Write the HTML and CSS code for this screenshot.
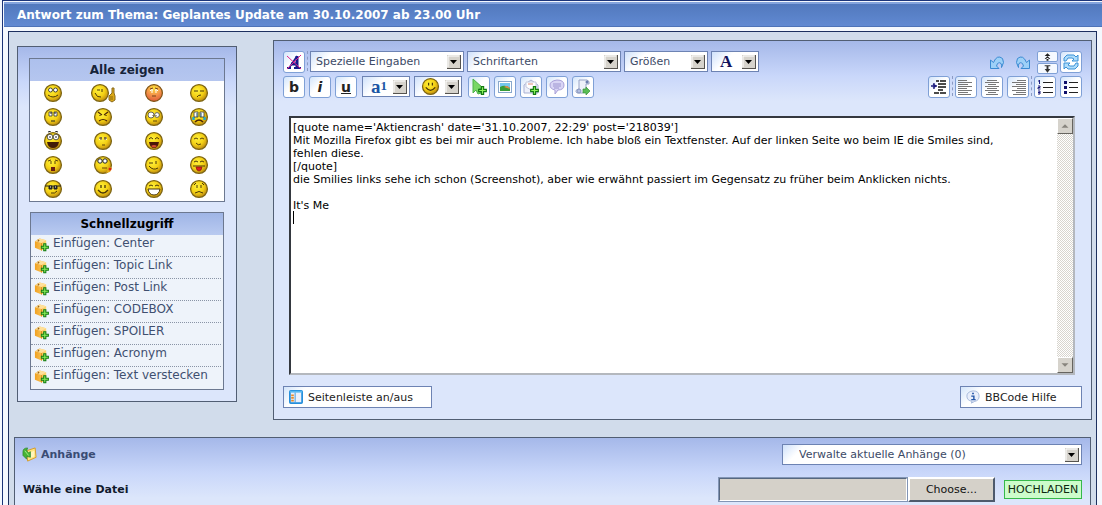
FILE: index.html
```html
<!DOCTYPE html>
<html lang="de">
<head>
<meta charset="utf-8">
<title>Antwort zum Thema</title>
<link rel="stylesheet" href="styles.css">
</head>
<body>
<svg class="defs" aria-hidden="true">
  <defs>
    <radialGradient id="gold" cx="40%" cy="35%" r="65%"><stop offset="0" stop-color="#fff23a"/><stop offset=".6" stop-color="#f3cf14"/><stop offset="1" stop-color="#c08d10"/></radialGradient>
    <radialGradient id="blush" cx="50%" cy="20%" r="80%"><stop offset="0" stop-color="#fbe03a"/><stop offset=".5" stop-color="#f59a4a"/><stop offset="1" stop-color="#df5a3a"/></radialGradient>
    <linearGradient id="box" x2="1"><stop offset="0" stop-color="#f0a020"/><stop offset="1" stop-color="#ffd873"/></linearGradient>
    <symbol id="head" viewBox="0 0 20 20"><circle cx="10" cy="10" r="8.4" fill="url(#gold)" stroke="#7c6413" stroke-width="1.3"/></symbol>
    <symbol id="plus" viewBox="0 0 8 8"><path d="M3 .6h2V3h2.4v2H5v2.4H3V5H.6V3H3z" fill="#8df25a" stroke="#127a12" stroke-width="1"/></symbol>
    <symbol id="package" viewBox="0 0 16 16"><path d="M1 5l5-3 7 2v8l-5 3-7-3z" fill="url(#box)"/><path d="M1 5l5-3 7 2-5 3z" fill="#ffe09a"/><path d="M4 3l2 1-2 2z" fill="#9a6418"/><path d="M8 7v8" stroke="#d98e1c"/><use href="#plus" x="7" y="7" width="9" height="9"/></symbol>
    <symbol id="arrow" viewBox="0 0 14 14"><rect width="14" height="14" fill="#d6d3cc"/><path d="M0 14h14V0" fill="none" stroke="#55534f" stroke-width="2"/><path d="M1 12V1h11" fill="none" stroke="#fff"/><path d="M3 5h7L6.500 9z" fill="#000"/></symbol>
    <symbol id="smile" viewBox="0 0 20 20"><use href="#head"/><path d="M8 6v3M12 6v3M5 11q5 6 10 0" fill="none" stroke="#4a3608" stroke-width="1.300"/></symbol>
    <symbol id="turn" viewBox="0 0 16 16"><path d="M1.500 6v8.500H10L7.500 12Q9 7 12 9.500 13 11 12.500 13.500 16 8 13.500 4.500 8 0 4.500 8.500z" fill="#9dd0f7" stroke="#3a8ad2"/></symbol>
  </defs>
</svg>
<main class="frame">
  <h1 class="title">Antwort zum Thema: Geplantes Update am 30.10.2007 ab 23.00 Uhr</h1>
  <div class="content">
    <div class="columns">
      <aside class="panel sidebar">
        <section class="smileys">
          <h2 class="box-head">Alle zeigen</h2>
          <div class="faces">
            <button class="face" aria-label="rolleyes"><svg viewBox="0 0 20 20"><use href="#head"/><circle cx="7.500" cy="7" r="2" fill="#fff" stroke="#222" stroke-width=".8"/><circle cx="12.500" cy="7" r="2" fill="#fff" stroke="#222" stroke-width=".8"/><path d="M5 12q5 4 10 0" fill="none" stroke="#4a3608"/></svg></button>
            <button class="face" aria-label="daumen"><svg class="wide" viewBox="0 0 26 20"><use href="#head" width="20" height="20"/><path d="M7 7h3M12 6v3M5 10q2 5 6 4" fill="none" stroke="#4a3608"/><path d="M22 5h2v5l1 3v4l-3 2-3-2v-4l3-3z" fill="#dba817" stroke="#8a6a1c"/><path d="M20 14h3M20 16h3" stroke="#70510a" stroke-width=".7"/></svg></button>
            <button class="face" aria-label="rot"><svg viewBox="0 0 20 20"><circle cx="10" cy="10" r="8.400" fill="url(#blush)" stroke="#7c5413" stroke-width="1.200"/><path d="M6 8q1-2 3-1M11 7q2-1 3 1M8 7v3M12 7v3" fill="none" stroke="#fff"/><path d="M6 6l3-1M11 5l3 1M8 13h4" stroke="#77411a"/></svg></button>
            <button class="face" aria-label="skeptisch"><svg viewBox="0 0 20 20"><use href="#head"/><path d="M5 8h4M11 8h4M8 14q1-2 4-2" fill="none" stroke="#4a3608"/></svg></button>

            <button class="face" aria-label="unschuldig"><svg viewBox="0 0 20 20"><use href="#head"/><path d="M6 5h3v4H6zM11 5h3v4h-3z" fill="#fff" stroke="#333" stroke-width=".8"/><path d="M8 5v2M12 5v2M8 14h4" stroke="#222"/></svg></button>
            <button class="face" aria-label="böse"><svg viewBox="0 0 20 20"><use href="#head"/><path d="M5 5l4 3M15 5l-4 3M7 8v1M13 8v1M6 14q4-3 8 0" fill="none" stroke="#4a2608" stroke-width="1.200"/></svg></button>
            <button class="face" aria-label="verwirrt"><svg viewBox="0 0 20 20"><use href="#head"/><circle cx="7" cy="8" r="3" fill="#fff" stroke="#444" stroke-width=".8"/><circle cx="13" cy="8" r="2.400" fill="#fff" stroke="#444" stroke-width=".8"/><path d="M9 8v1M12 8v1M9 14h4" stroke="#634708"/></svg></button>
            <button class="face" aria-label="weinen"><svg viewBox="0 0 20 20"><use href="#head"/><path d="M4.500 10v3M15.500 10v3" stroke="#24a6c8" stroke-width="2.500"/><path d="M5 5h4v5H5zM11 5h4v5h-4z" fill="#fff" stroke="#333" stroke-width=".8"/><path d="M8 6v4M12 6v4" stroke="#256"/><path d="M6 15q4-4 8 0" fill="none" stroke="#4a2608" stroke-width="1.500"/></svg></button>

            <button class="face" aria-label="staunen"><svg viewBox="0 0 20 20"><use href="#head"/><circle cx="7" cy="6" r="2.800" fill="#fff" stroke="#333" stroke-width=".8"/><circle cx="13" cy="6" r="2.800" fill="#fff" stroke="#333" stroke-width=".8"/><path d="M7 5v2M13 5v2M5 1l3-1M12 0l3 1" stroke="#222"/><path d="M4 11h12q-1 6-6 6t-6-6z" fill="#401c08"/></svg></button>
            <button class="face" aria-label="augenbraue"><svg viewBox="0 0 20 20"><use href="#head"/><path d="M6 6h3v3H6zM11 6h3v3h-3z" fill="#fff8c0"/><path d="M6 7h3M11 7h3M8 6v3M12 6v3M9 14h3" stroke="#5a4208"/></svg></button>
            <button class="face" aria-label="lachen"><svg viewBox="0 0 20 20"><use href="#head"/><path d="M5 8q2-3 4 0M11 8q2-3 4 0" fill="none" stroke="#4a3608"/><path d="M5 11h10q-1 6-5 6t-5-6z" fill="#4a1608"/><path d="M7 15q3-2 6 0-3 3-6 0z" fill="#d64a30"/></svg></button>
            <button class="face" aria-label="zufrieden"><svg viewBox="0 0 20 20"><use href="#head"/><path d="M5 8q2-2 4 0M11 8q2-2 4 0M7 12q2 3 5 1" fill="none" stroke="#5a4208"/></svg></button>

            <button class="face" aria-label="oh"><svg viewBox="0 0 20 20"><use href="#head"/><path d="M5 6l3-1M12 5l3 1M8 6v3M12 6v3" stroke="#5a4208"/><rect x="8" y="12" width="4" height="4" fill="#6a1c10"/></svg></button>
            <button class="face" aria-label="pfeifen"><svg viewBox="0 0 20 20"><use href="#head"/><circle cx="7" cy="6" r="2.200" fill="#fff" stroke="#222"/><circle cx="12" cy="6" r="2.200" fill="#fff" stroke="#222"/><path d="M9 13h5" stroke="#6a4208"/><path d="M16 11l3 2-2 4-4 1z" fill="#e4ad19"/><circle cx="17" cy="14" r="1.500" fill="#d62014"/></svg></button>
            <button class="face" aria-label="zwinkern"><svg viewBox="0 0 20 20"><use href="#head"/><path d="M5 8h4M12 6v3M5 11q4 5 9 2" fill="none" stroke="#4a3608"/></svg></button>
            <button class="face" aria-label="zunge"><svg viewBox="0 0 20 20"><use href="#head"/><path d="M5 7q2-2 4 0M11 7q2-2 4 0M4 11h12" fill="none" stroke="#4a3608"/><path d="M7 12h6l-1 3-2 1-2-1z" fill="#dc2020" stroke="#871010" stroke-width=".7"/></svg></button>

            <button class="face" aria-label="cool"><svg viewBox="0 0 20 20"><use href="#head"/><path d="M2 7h16M6 7h3v3H6zM11 7h3v3h-3z" fill="#222" stroke="#222"/><path d="M7 8h1M12 8h1" stroke="#fff"/><path d="M8 14q4 1 6-2" fill="none" stroke="#4a3608"/></svg></button>
            <button class="face" aria-label="lächeln"><svg viewBox="0 0 20 20"><use href="#smile"/></svg></button>
            <button class="face" aria-label="grinsen"><svg viewBox="0 0 20 20"><use href="#head"/><path d="M5 7q2-2 4 0M11 7q2-2 4 0" fill="none" stroke="#4a3608"/><path d="M4 10h12q-1 6-6 6t-6-6z" fill="#fff" stroke="#4a3608"/></svg></button>
            <button class="face" aria-label="traurig"><svg viewBox="0 0 20 20"><use href="#head"/><path d="M5 6l2-2M13 4l2 2M8 6v3M12 6v3M6 14q4-3 8 0" fill="none" stroke="#4a3608"/></svg></button>
          </div>
        </section>
        <section class="quick">
          <h2 class="box-head dark">Schnellzugriff</h2>
          <ul class="quick-list">
            <li><svg class="ico"><use href="#package"/></svg><a href="#">Einfügen: Center</a></li>
            <li><svg class="ico"><use href="#package"/></svg><a href="#">Einfügen: Topic Link</a></li>
            <li><svg class="ico"><use href="#package"/></svg><a href="#">Einfügen: Post Link</a></li>
            <li><svg class="ico"><use href="#package"/></svg><a href="#">Einfügen: CODEBOX</a></li>
            <li><svg class="ico"><use href="#package"/></svg><a href="#">Einfügen: SPOILER</a></li>
            <li><svg class="ico"><use href="#package"/></svg><a href="#">Einfügen: Acronym</a></li>
            <li><svg class="ico"><use href="#package"/></svg><a href="#">Einfügen: Text verstecken</a></li>
          </ul>
        </section>
      </aside>

      <section class="panel editor">
        <div class="bar">
          <button class="tool" aria-label="Formatierung entfernen"><svg viewBox="0 0 20 20"><path d="M3 16h4M10 16h7" stroke="#171a8c" stroke-width="2"/><path d="M5 16l8-12" stroke="#171a8c" stroke-width="1.500"/><path d="M13 4v12M7 12h6" fill="none" stroke="#171a8c" stroke-width="3"/><path d="M3 4l14 13M17 3L3 17" stroke="#e0208c" stroke-width="1"/></svg></button>
          <i class="sep"></i>
          <span class="pick long"><select aria-label="Spezielle Eingaben"><option>Spezielle Eingaben</option></select><svg class="drop"><use href="#arrow"/></svg></span>
          <span class="pick long"><select aria-label="Schriftarten"><option>Schriftarten</option></select><svg class="drop"><use href="#arrow"/></svg></span>
          <span class="pick medium"><select aria-label="Größen"><option>Größen</option></select><svg class="drop"><use href="#arrow"/></svg></span>
          <button class="pick short letter" aria-label="Farbe">A<svg class="drop"><use href="#arrow"/></svg></button>
          <span class="grow"></span>
          <button class="plain" aria-label="Rückgängig"><svg viewBox="0 0 16 16"><use href="#turn"/></svg></button>
          <button class="plain" aria-label="Wiederholen"><svg viewBox="0 0 16 16"><use href="#turn" transform="matrix(-1 0 0 1 16 0)"/></svg></button>
          <span class="stack">
            <button class="half" aria-label="Kleiner"><svg viewBox="0 0 20 8"><path d="M10 0L7 3h6zM10 3L7 6h6zM9 5h2v3H9z" fill="#222"/></svg></button>
            <button class="half" aria-label="Größer"><svg viewBox="0 0 20 8"><path d="M7 0h6v1H7zM9 1h2v3h2l-3 4-3-4h2z" fill="#333"/></svg></button>
          </span>
          <button class="tool" aria-label="Umschalten"><svg viewBox="0 0 20 20"><path d="M3 9V6l3-3h7l2 2 2-2v6h-6l2-2-2-1H7L5 9zM17 11v3l-3 3H7l-2-2-2 2v-6h6l-2 2 2 1h4l2-3z" fill="#aedcfa" stroke="#3a92d8"/></svg></button>
        </div>
        <div class="bar second">
          <button class="tool" aria-label="Fett"><span class="b">b</span></button>
          <button class="tool gap" aria-label="Kursiv"><span class="b it">i</span></button>
          <button class="tool gap" aria-label="Unterstrichen"><span class="b un">u</span></button>
          <button class="pick short first letter blue" aria-label="Hintergrund"><span>a<sup>1</sup></span><svg class="drop"><use href="#arrow"/></svg></button>
          <button class="pick short next" aria-label="Smileys"><svg class="smiley"><use href="#smile"/></svg><svg class="drop"><use href="#arrow"/></svg></button>
          <button class="tool wide-gap" aria-label="Link"><svg viewBox="0 0 20 20"><path d="M4 2l10 9-4 1 2 4-3 1-2-4-3 3z" fill="#79d765" stroke="#4bb24a"/><use href="#plus" x="9" y="9" width="9" height="9"/></svg></button>
          <button class="tool gap" aria-label="Bild"><svg viewBox="0 0 20 20"><rect x="3.500" y="4.500" width="13" height="11" fill="#fff" stroke="#8aa8cc"/><path d="M5 6h10v8H5z" fill="#75c6ed"/><path d="M5 10q5-3 10 1v3H5z" fill="#379c39"/><path d="M9 10q4-3 6 2z" fill="#e38b49"/></svg></button>
          <button class="tool gap" aria-label="E-Mail"><svg viewBox="0 0 20 20"><path d="M3 8l7-5 7 5v8H3z" fill="#eef0fa" stroke="#a9b1d4"/><path d="M5 5h10v5l-5 3-5-3z" fill="#fff" stroke="#c3c9df"/><path d="M7 7h5" stroke="#dd8a7a"/><use href="#plus" x="9" y="9" width="9" height="9"/></svg></button>
          <button class="tool gap" aria-label="Zitat"><svg viewBox="0 0 20 20"><path d="M10 3q7 0 7 5t-6 5l-3 4v-4q-5-1-5-5t7-5z" fill="#d9d5f5" stroke="#a9a0d8"/><path d="M6 7h8M6 9h8M7 11h5" stroke="#9c94cf"/></svg></button>
          <button class="tool gap" aria-label="Code"><svg viewBox="0 0 20 20"><path d="M6 3h8q3 1 2 4h-3v6l-3 3H4q-3-3 2-4z" fill="#eef1fa" stroke="#96a3c6"/><circle cx="14" cy="5" r="1.500" fill="#6d7fb1"/><circle cx="6" cy="14" r="2" fill="#b3bfe0" stroke="#8796be"/><path d="M10 12h3v-2l4 4-4 4v-2h-3z" fill="#59bd55" stroke="#369339" stroke-width=".7"/></svg></button>
          <span class="grow"></span>
          <button class="tool" aria-label="Einzug"><svg viewBox="0 0 20 20"><path d="M7 4h3M11 4h6M9 7h8M9 10h8M9 13h5M5 16h5M11 16h6" stroke="#111" stroke-width="1.500"/><path d="M2 9h6M5 6v6M4 7l3 2-3 2" fill="none" stroke="#1b1b7d" stroke-width="1.300"/></svg></button>
          <i class="sep"></i>
          <button class="tool" aria-label="Linksbündig"><svg viewBox="0 0 20 20"><path d="M2 3.500h9M2 5.500h14M2 7.500h10M2 9.500h14M2 11.500h9M2 13.500h14M2 15.500h10M2 17.500h13" stroke="#777"/></svg></button>
          <button class="tool gap" aria-label="Zentriert"><svg viewBox="0 0 20 20"><path d="M5 3.500h10M3 5.500h14M6 7.500h8M3 9.500h14M5 11.500h10M3 13.500h14M6 15.500h8M4 17.500h12" stroke="#777"/></svg></button>
          <button class="tool gap" aria-label="Rechtsbündig"><svg viewBox="0 0 20 20"><path d="M9 3.500h9M4 5.500h14M8 7.500h10M4 9.500h14M9 11.500h9M4 13.500h14M8 15.500h10M5 17.500h13" stroke="#777"/></svg></button>
          <i class="sep"></i>
          <button class="tool" aria-label="Nummerierte Liste"><svg viewBox="0 0 20 20"><path d="M8 5.500h10M8 10.500h10M8 15.500h10" stroke="#222"/><path d="M4.500 3v4M3 4h1.500M3 9h2v1.500H3V12h2.500M3 14h2v3H3M3 15.500h2" fill="none" stroke="#1b1b7d"/></svg></button>
          <button class="tool gap" aria-label="Liste"><svg viewBox="0 0 20 20"><path d="M8 5.500h9M8 10.500h9M8 15.500h9" stroke="#222"/><path d="M3 4h3v3H3zM3 9h3v3H3zM3 14h3v3H3z" fill="#10106b"/></svg></button>
        </div>
        <div class="field">
          <textarea aria-label="Beitrag" spellcheck="false">[quote name='Aktiencrash' date='31.10.2007, 22:29' post='218039']
Mit Mozilla Firefox gibt es bei mir auch Probleme. Ich habe bloß ein Textfenster. Auf der linken Seite wo beim IE die Smiles sind, fehlen diese.
[/quote]
die Smilies links sehe ich schon (Screenshot), aber wie erwähnt passiert im Gegensatz zu früher beim Anklicken nichts.

It's Me
</textarea>
          <i class="caret"></i>
          <div class="scroll"><svg viewBox="0 0 16 16"><path d="M4 10h8L8 6z"/></svg><svg viewBox="0 0 16 16"><path d="M4 6h8l-4 4z"/></svg></div>
        </div>
        <div class="foot">
          <button class="action"><svg viewBox="0 0 16 16"><rect x="1" y="1" width="14" height="14" rx="1" fill="#eaf0fc" stroke="#258fdc" stroke-width="2"/><path d="M1 2h14" stroke="#55b9f2" stroke-width="2"/><path d="M7 3v11" stroke="#2d91da"/><path d="M4 5v9" stroke="#e48a2a" stroke-width="3" stroke-dasharray="2 1"/></svg>Seitenleiste an/aus</button>
          <button class="action help"><svg viewBox="0 0 16 16"><path d="M8 1q7 0 7 6 0 5-5 6l-4 2 1-2Q1 12 1 7t7-6z" fill="#e8eefb" stroke="#9fb3d8"/><path d="M7 4h2M6 7h3v4M6 11h5" fill="none" stroke="#2456a8" stroke-width="1.600"/></svg>BBCode Hilfe</button>
        </div>
      </section>
    </div>

    <section class="panel attach">
      <div class="attach-row">
        <h2 class="attach-head"><svg viewBox="0 0 16 16"><path d="M5 4l9-3 1 10-9 4z" fill="#ffe680" stroke="#d69b24"/><path d="M8 6l5-2v6l-5 2z" fill="#fff5bd"/><path d="M1 5q0-4 5-4L5 4l2 2 2-1v6L5 10v3L1 9z" fill="#46b334" stroke="#2a842a" stroke-width=".7"/><path d="M3 4l4 5" stroke="#a6ee8a"/></svg>Anhänge</h2>
        <span class="pick manage"><select aria-label="Anhänge verwalten"><option>Verwalte aktuelle Anhänge (0)</option></select><svg class="drop"><use href="#arrow"/></svg></span>
      </div>
      <div class="attach-row files">
        <label class="file-label" for="path">Wähle eine Datei</label>
        <input class="path" id="path" type="text">
        <button class="choose">Choose...</button>
        <button class="upload">HOCHLADEN</button>
      </div>
    </section>
  </div>
</main>
</body>
</html>
```

FILE: styles.css
```css
* { box-sizing: border-box; }
html { background: #f4f8fe; }
body { margin: 0; font: 11px/13px "DejaVu Sans", sans-serif; color: #222; }
button, select, input, textarea { font: inherit; color: inherit; margin: 0; }
button { padding: 0; }
h1, h2, ul { margin: 0; padding: 0; }
svg { display: block; flex: none; }
.defs { position: absolute; width: 0; height: 0; }

.frame { display: flex; flex-direction: column; min-height: 100vh; margin-left: 2px; padding: 1px 0 0 1px; border: 1px solid #1b3478; border-width: 1px 0 0 1px; }
.title { height: 25px; padding-left: 13px; border-top: 2px solid #84a4dd; border-bottom: 1px solid #4d73b8; background: linear-gradient(#5279bd, #6089d2); color: #fff; font-size: 12px; line-height: 22px; font-weight: bold; }
.content { display: flex; flex-direction: column; flex: 1; margin: 4px 5px 0 4px; padding-top: 8px; border: 1px solid #1d305f; border-bottom: 0; background: #d1dceb; }
.columns { display: flex; align-items: flex-start; gap: 36px; padding: 0 4px 0 8px; }
.panel { border: 1px solid #515e73; background: #dce6fb linear-gradient(#a5b8e9, #c9d7fa 35px, #dce6fb 60px) no-repeat 0 0 / 100% 60px; }

.sidebar { width: 220px; margin-top: 6px; padding: 11px 11px 11px; }
.smileys, .quick { border: 1px solid #6c7890; background: #fff; }
.quick { margin: 10px 1px 0; background: #eef3fa; }
.box-head { height: 22px; background: linear-gradient(#adc0ed, #b5c6ef); color: #16233a; text-align: center; font-size: 12px; line-height: 23px; }
.box-head.dark { background: linear-gradient(#9fb5e6, #b9caf0); color: #000; }
.faces { display: grid; grid-template-columns: 46fr 54fr 48fr 42fr; grid-auto-rows: 24px; padding-right: 4px; }
.face { display: grid; place-items: center; border: 0; background: none; }
.face svg { width: 20px; height: 20px; }
.face .wide { width: 26px; }
.quick-list { list-style: none; }
.quick-list li { display: flex; gap: 4px; height: 22px; padding: 0 0 0 3px; margin-right: 2px; border-bottom: 1px dotted #8a94a6; line-height: 17px; font-size: 12px; }
.quick-list li:last-child { border-bottom: 0; }
.quick-list a { color: #3f4f70; text-decoration: none; }
.ico { width: 15px; height: 16px; margin-top: 1px; }

.editor { flex: 1; min-width: 0; padding: 10px 9px 11px; }
.bar { display: flex; align-items: flex-start; height: 25px; }
.tool { display: grid; place-items: center; flex: none; width: 22px; height: 22px; border: 1px solid #7fa0d6; border-radius: 3px; background: linear-gradient(135deg, #d3e5fb, #fff 45%); }
.tool svg { width: 20px; height: 20px; }
.gap { margin-left: 4px; }
.wide-gap { margin-left: 6px; }
.grow { flex: 1; }
.sep { flex: none; width: 1px; height: 20px; margin: 0 2px; border-left: 1px dashed #8b9bc4; }
.pick { position: relative; display: flex; align-items: center; flex: none; height: 21px; margin-right: 3px; border: 1px solid #6d83b3; background: linear-gradient(135deg, #cfe1fb, #fff 16px); color: #3c4a66; }
.pick select { appearance: none; width: 100%; height: 19px; padding: 0 18px 0 5px; border: 0; outline: 0; background: none; line-height: 17px; }
.drop { position: absolute; right: 2px; top: 3px; width: 14px; height: 14px; pointer-events: none; }
.long { width: 154px; }
.medium { width: 84px; }
.short { width: 48px; margin-right: 0; }
.first { margin-left: 5px; }
.next { margin-left: 4px; }
.letter { padding-left: 8px; font: bold 17px/19px "Liberation Serif", serif; color: #12125c; }
.blue { color: #1c55a5; font-size: 19px; }
.blue sup { font-size: 13px; line-height: 0; vertical-align: 3px; }
.smiley { width: 19px; height: 19px; margin-left: 6px; }
.b { font-size: 14px; line-height: 16px; font-weight: bold; color: #222; }
.it { font-style: italic; }
.un { text-decoration: underline; }
.plain { width: 16px; height: 16px; margin: 3px 10px 0 0; padding: 0; border: 0; background: none; }
.plain + .stack { margin-left: -4px; }
.stack { display: grid; gap: 1px; margin-right: 2px; }
.half { width: 21px; height: 11px; border: 1px solid #7fa0d6; border-radius: 2px; background: #f5f9ff; }
.half svg { width: 19px; height: 8px; }

.field { position: relative; display: flex; height: 259px; margin: 15px 7px 0 6px; border: 2px solid #b4b8be; border-top-color: #34383f; border-left-color: #34383f; background: #fff; }
.field textarea { flex: 1; min-width: 0; padding: 3px 28px 3px 2px; border: 0; outline: 0; resize: none; overflow: hidden; background: none; line-height: 13px; color: #000; }
.caret { position: absolute; left: 2px; top: 93px; width: 1px; height: 13px; background: #000; }
.scroll { display: flex; flex-direction: column; justify-content: space-between; width: 16px; background: repeating-conic-gradient(#d8d5ce 0 25%, #fff 0 50%) 0 0 / 2px 2px; }
.scroll svg { width: 16px; height: 16px; border: 1px solid; border-color: #fff #66645f #66645f #fff; background: #d6d3cc; fill: #88857e; }
.foot { display: flex; justify-content: space-between; padding-top: 11px; }
.action { display: flex; align-items: center; gap: 5px; width: 149px; height: 22px; padding-left: 5px; border: 1px solid #6d83b3; background: linear-gradient(135deg, #d3e5fb, #fff 16px); }
.action svg { width: 14px; height: 14px; }
.help { width: 122px; }

.attach { flex: 1; margin: 17px 5px 0 5px; padding: 6px 8px 0 7px; border-bottom: 0; }
.attach-row { display: flex; align-items: center; justify-content: space-between; }
.attach-head { display: flex; align-items: center; gap: 4px; color: #3a4c74; font-size: 11px; }
.attach-head svg { width: 15px; height: 15px; }
.manage { width: 300px; margin: 0; }
.manage select { padding-left: 16px; }
.files { margin-top: 12px; }
.file-label { flex: 1; padding-left: 1px; font-weight: bold; color: #111a2c; }
.path { width: 190px; height: 25px; border: 2px solid; border-color: #56677f #fff #fff #56677f; background: #d5d1c9; outline: 1px solid #8295b5; outline-offset: -1px; }
.choose { width: 87px; height: 25px; border: 2px solid; border-color: #fff #4e5a6c #4e5a6c #fff; background: #d5d1c9; color: #111; }
.upload { width: 78px; height: 19px; margin-left: 9px; border: 1px solid #36b94a; background: #ccfccb; color: #0d290f; }
```
